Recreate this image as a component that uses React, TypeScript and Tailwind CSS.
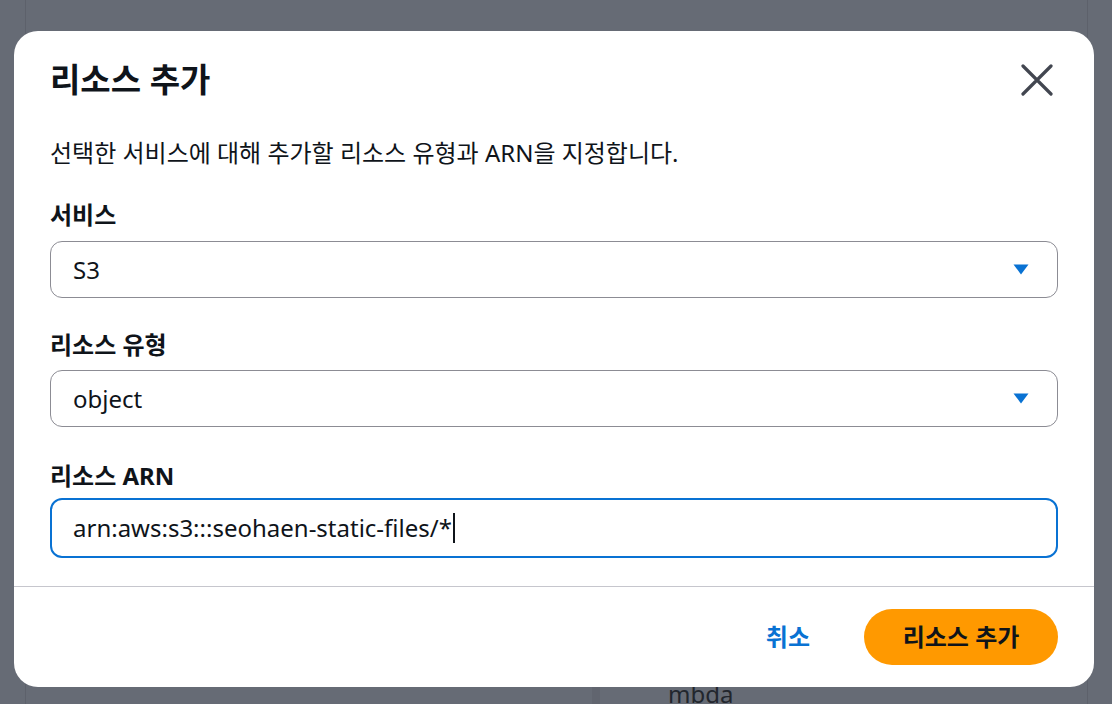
import React from "react";

const font = { fontFamily: '"Noto Sans", "Noto Sans CJK KR", sans-serif' };

function Caret() {
  return (
    <svg width="16" height="11" viewBox="0 0 16 11" className="shrink-0">
      <path d="M0.5 0.5h15L8 10.5z" fill="#0972d3" />
    </svg>
  );
}

function SelectBox({ value }: { value: string }) {
  return (
    <div className="flex h-[57px] items-center justify-between rounded-xl border border-[#8c8c94] bg-white pl-[22px] pr-[28px]">
      <span className="text-[24px] leading-[30px] text-[#0f141a]">{value}</span>
      <Caret />
    </div>
  );
}

function Label({ children }: { children: React.ReactNode }) {
  return <div className="text-[24px] font-bold leading-[28px] text-[#0f141a]">{children}</div>;
}

function Backdrop() {
  // faint page under the overlay
  return (
    <div className="absolute inset-0 flex">
      <div className="w-[26px] border-r border-[#5d616b]" />
      <div className="flex flex-1 flex-col justify-end">
        <div className="flex h-[32px] items-end">
          <div className="w-[566px]" />
          <div className="h-full w-[8px] bg-[#61656f]" />
          <div className="pl-[68px] text-[24px] leading-[20px] text-[#22262d]">mbda</div>
        </div>
      </div>
      <div className="w-[25px] border-l border-[#5d616b]" />
    </div>
  );
}

export default function App() {
  return (
    <div className="relative h-[704px] w-[1112px] overflow-hidden bg-[#666b75]" style={font}>
      <Backdrop />
      <div className="absolute inset-0 pl-[14px] pt-[31px]">
        <div className="flex h-[656px] w-[1080px] flex-col rounded-[24px] bg-white">
          <div className="flex flex-col px-9">
            <div className="flex items-center justify-between pt-[29px]">
              <h2 className="text-[33px] font-bold leading-[40px] text-[#0f141a]">리소스 추가</h2>
              <button type="button" className="mr-[1px] flex h-[40px] w-[40px] items-center justify-center">
                <svg width="32" height="32" viewBox="0 0 32 32">
                  <path d="M2 2L30 30M30 2L2 30" stroke="#424650" strokeWidth="3.2" strokeLinecap="round" />
                </svg>
              </button>
            </div>
            <p className="mt-[39px] text-[24px] leading-[28px] text-[#0f141a]">
              선택한 서비스에 대해 추가할 리소스 유형과 ARN을 지정합니다.
            </p>

            <div className="mt-[34px]">
              <Label>서비스</Label>
            </div>
            <div className="mt-[12px]">
              <SelectBox value="S3" />
            </div>

            <div className="mt-[33px]">
              <Label>리소스 유형</Label>
            </div>
            <div className="mt-[11px]">
              <SelectBox value="object" />
            </div>

            <div className="mt-[35px]">
              <Label>리소스 ARN</Label>
            </div>
            <div className="mt-[8px] flex h-[60px] items-center rounded-xl border-2 border-[#0972d3] pl-[21px]">
              <span className="text-[24px] leading-[30px] text-[#0f141a]">arn:aws:s3:::seohaen-static-files/*</span>
              <span className="ml-[1px] h-[30px] w-[2px] bg-[#0f141a]" />
            </div>
          </div>

          <div className="mt-[28px] border-t border-[#c6c6cd]" />

          <div className="flex items-center justify-end gap-[44px] px-9 pt-[22px]">
            <button type="button" className="px-[10px] text-[24px] font-bold text-[#0972d3]">
              취소
            </button>
            <button
              type="button"
              className="flex h-[56px] w-[194px] items-center justify-center rounded-full bg-[#ff9900] text-[24px] font-bold text-[#0f141a]"
            >
              리소스 추가
            </button>
          </div>
        </div>
      </div>
    </div>
  );
}
